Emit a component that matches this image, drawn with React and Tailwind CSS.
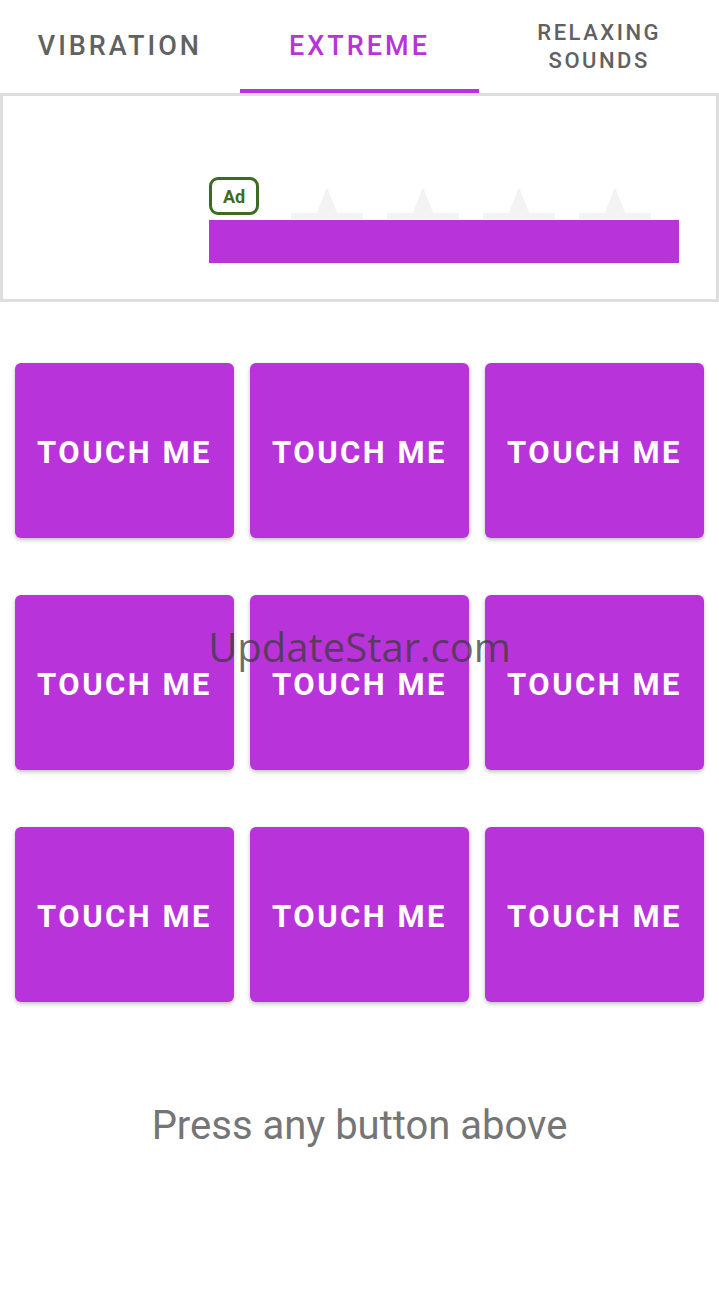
import React from 'react';

const tabs = ['VIBRATION', 'EXTREME', 'RELAXING SOUNDS'];

function Tab({ label, active }) {
  if (label === 'RELAXING SOUNDS') {
    return (
      <div className="flex-1 flex flex-col items-center justify-center text-[22px] leading-[28px] font-medium tracking-[2.5px] text-[#616161]">
        <span>RELAXING</span>
        <span>SOUNDS</span>
      </div>
    );
  }
  return (
    <div className="flex-1 relative flex items-center justify-center">
      <span className={`text-[27px] font-medium tracking-[3px] ${active ? 'text-[#b933db]' : 'text-[#616161]'}`}>{label}</span>
      {active && <div className="absolute bottom-0 left-0 right-0 h-1 bg-[#b933db]" />}
    </div>
  );
}

export default function App() {
  const cells = Array.from({ length: 9 });
  return (
    <div className="relative w-[719px] min-h-[1289px] bg-white" style={{ fontFamily: 'Roboto, "Liberation Sans", sans-serif' }}>
      <div className="flex h-[93px]">
        {tabs.map((t) => (
          <Tab key={t} label={t} active={t === 'EXTREME'} />
        ))}
      </div>

      <div className="h-[209px] border-[3px] border-[#dedede] pl-[206px] pt-[81px]">
        <div className="flex items-end">
          <div className="w-[50px] h-[38px] border-[3px] border-[#3d6b22] rounded-[9px] flex items-center justify-center text-[18px] font-bold text-[#3d6b22]">
            Ad
          </div>
          <svg width="420" height="40" viewBox="0 0 420 40" className="-mb-[4px]">
            {[68, 164, 260, 356].map((x) => (
              <g key={x} fill="#f3f3f3">
                <polygon points={`${x - 11},36 ${x},8 ${x + 11},36`} />
                <rect x={x - 36} y="34" width="72" height="6" />
              </g>
            ))}
          </svg>
        </div>
        <div className="mt-[5px] w-[470px] h-[43px] bg-[#b933db]" />
      </div>

      <div className="mt-[61px] px-[15px] grid grid-cols-3 gap-x-4 gap-y-[57px]">
        {cells.map((_, i) => (
          <div
            key={i}
            className="h-[175px] rounded-md bg-[#b933db] shadow-[0_2px_4px_rgba(0,0,0,0.25)] flex items-center justify-center pt-[5px] text-white text-[31px] font-bold tracking-[2.5px]"
          >
            TOUCH ME
          </div>
        ))}
      </div>

      <div className="mt-[94px] text-center text-[40px] text-[#757575]">Press any button above</div>

      <div className="absolute top-[617px] left-0 right-0 text-center text-[40px] text-[rgba(60,60,60,0.75)] pointer-events-none" style={{ fontFamily: '"Open Sans", sans-serif' }}>
        UpdateStar.com
      </div>
    </div>
  );
}
